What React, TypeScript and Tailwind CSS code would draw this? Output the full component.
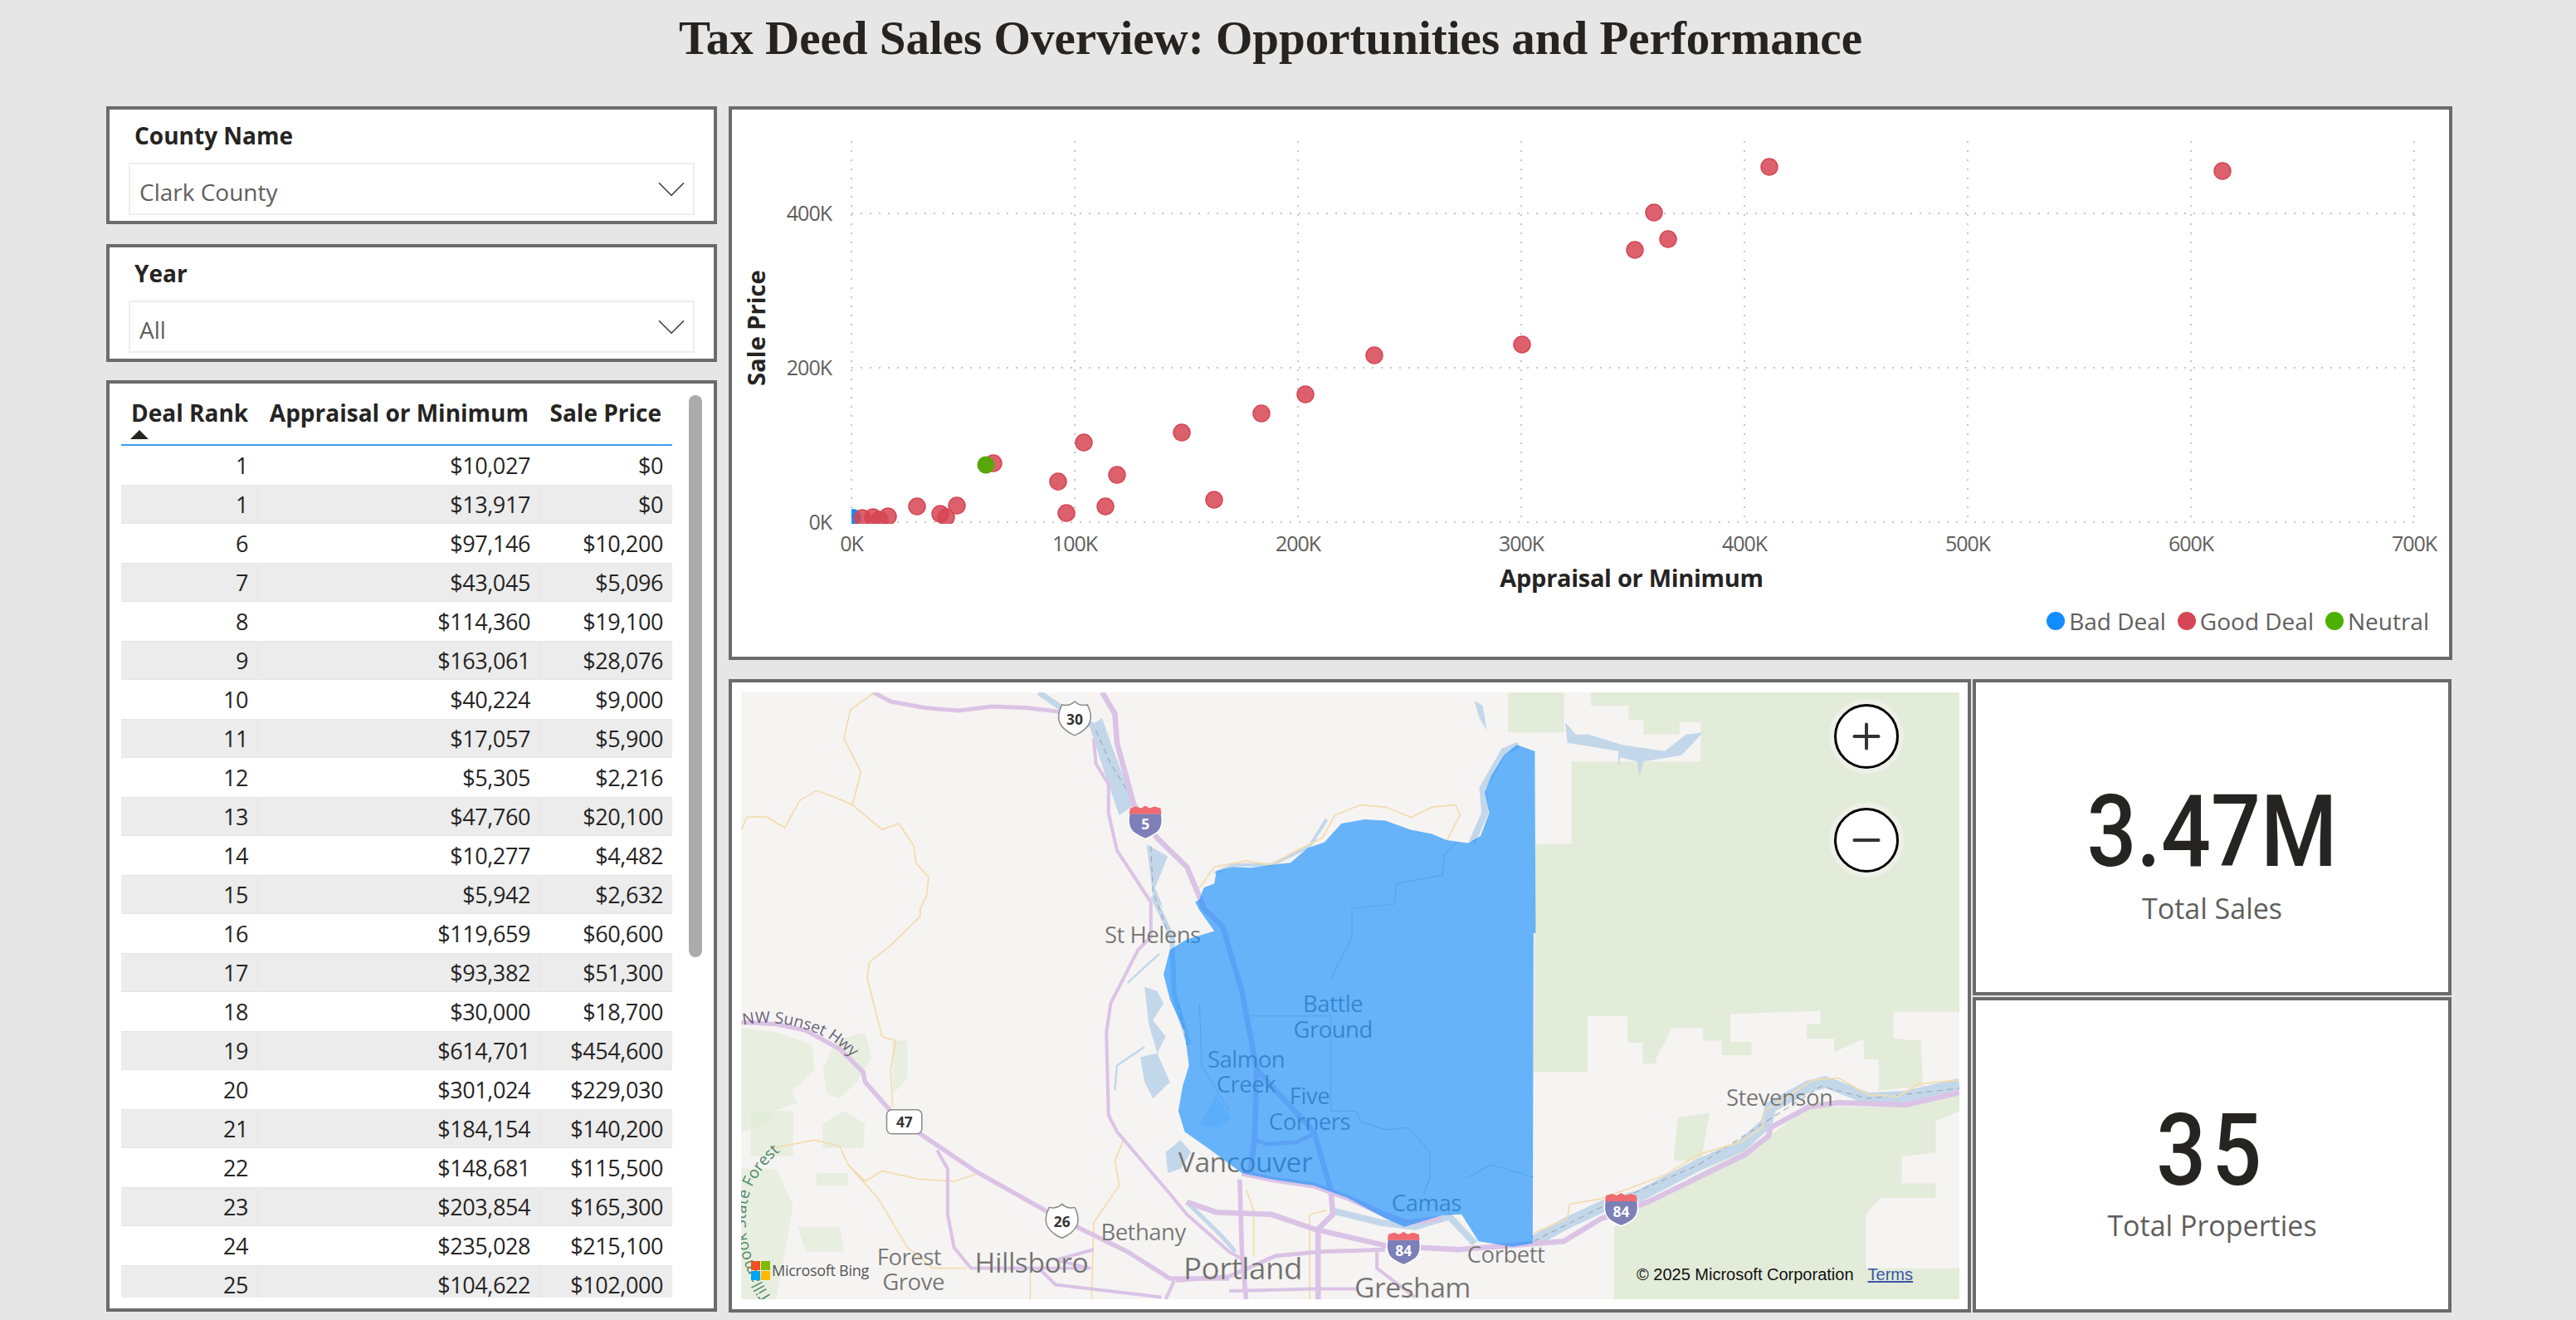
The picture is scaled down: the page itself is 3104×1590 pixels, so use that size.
import React from 'react';
import { ChevronDown, Plus, Minus } from 'lucide-react';

const rows: [number, string, string][] = [
    [1, '$10,027', '$0'],
    [1, '$13,917', '$0'],
    [6, '$97,146', '$10,200'],
    [7, '$43,045', '$5,096'],
    [8, '$114,360', '$19,100'],
    [9, '$163,061', '$28,076'],
    [10, '$40,224', '$9,000'],
    [11, '$17,057', '$5,900'],
    [12, '$5,305', '$2,216'],
    [13, '$47,760', '$20,100'],
    [14, '$10,277', '$4,482'],
    [15, '$5,942', '$2,632'],
    [16, '$119,659', '$60,600'],
    [17, '$93,382', '$51,300'],
    [18, '$30,000', '$18,700'],
    [19, '$614,701', '$454,600'],
    [20, '$301,024', '$229,030'],
    [21, '$184,154', '$140,200'],
    [22, '$148,681', '$115,500'],
    [23, '$203,854', '$165,300'],
    [24, '$235,028', '$215,100'],
    [25, '$104,622', '$102,000'],
];

// chart dots, in page pixels
const goodDeals = [
    [1039, 624], [1052, 623], [1060, 626], [1070, 622], [1105, 610], [1133, 619], [1140, 623], [1153, 609],
    [1197, 558], [1275, 580], [1306, 533], [1285, 618], [1346, 572], [1332, 610], [1424, 521], [1463, 602],
    [1520, 498], [1573, 475], [1656, 428], [1834, 415], [1970, 301], [1993, 256], [2010, 288], [2132, 201], [2678, 206],
];

const xTicks = [0, 100, 200, 300, 400, 500, 600, 700];
const yTicks: [string, number][] = [['400K', 257], ['200K', 443], ['0K', 629]];

const Slicer = ({ title, value }: { title: string; value: string }) => (
    <div className="h-[142px] bg-white border-4 border-[#6b6b6b] pt-[13px] px-[23px] flex flex-col">
        <div className="h-[51px] pl-[7px] text-[28px] leading-[36px] font-bold text-[#252423] tracking-[0px]">{title}</div>
        <div className="h-[63px] border-2 border-[#eeeeee] flex items-center justify-between pl-[11px] relative">
            <span className="text-[28px] text-[#605e5c] tracking-[0px] mt-[6px]">{value}</span>
            <ChevronDown size={58} strokeWidth={0.7} className="absolute right-[-3px] top-[1px] text-[#444444]" />
        </div>
    </div>
);

const DealTable = () => (
    <div className="h-[1122px] bg-white border-4 border-[#6b6b6b] relative overflow-hidden pt-[14px] pl-[14px]">
        <div className="w-[664px]">
            <div className="h-[61px] relative flex text-[28px] leading-[36px] font-bold text-[#252423] tracking-[0px] border-b-2 border-[#3d9df5]">
                <div className="w-[165px] pl-[12px] pt-[3px] whitespace-nowrap">Deal Rank</div>
                <div className="w-[340px] pt-[3px] text-right pr-[14px] whitespace-nowrap">Appraisal or Minimum</div>
                <div className="w-[159px] pt-[3px] text-right pr-[13px] whitespace-nowrap">Sale Price</div>
                <div className="absolute left-[11px] bottom-[6px] w-0 h-0 border-l-[11px] border-r-[11px] border-b-[11px] border-l-transparent border-r-transparent border-b-[#252423]"></div>
            </div>
            <div className="h-[1026px] overflow-hidden text-[27px] tracking-[-0.4px] text-[#252423]">
                {rows.map(([rank, appraisal, sale], i) => (
                    <div key={i} className={`h-[47px] flex items-center text-right border-y ${i % 2 === 1 ? 'bg-[#ececec] border-[#e4e4e4]' : 'bg-white border-transparent'}`}>
                        <div className={`w-[165px] pr-[11px] pt-[1px] border-r ${i % 2 === 1 ? 'border-[#e4e4e4]' : 'border-transparent'}`}>{rank}</div>
                        <div className={`w-[340px] pr-[11px] pt-[1px] border-r ${i % 2 === 1 ? 'border-[#e4e4e4]' : 'border-transparent'}`}>{appraisal}</div>
                        <div className="w-[159px] pr-[11px] pt-[1px]">{sale}</div>
                    </div>
                ))}
            </div>
        </div>
        <div className="absolute left-[698px] top-[14px] w-[16px] h-[677px] rounded-full bg-[#ababab]"></div>
    </div>
);

const ScatterChart = () => (
    <svg className="block w-[2069px] h-[588px]" viewBox="882 132 2069 588" fontFamily="'Open Sans', sans-serif">
        <defs>
            <clipPath id="plot"><rect x="1026" y="130" width="1900" height="501" /></clipPath>
        </defs>
        {xTicks.map((t) => {
            const x = 1026 + t * 2.69;
            return (
                <g key={t}>
                    <line x1={x} x2={x} y1={170} y2={631} stroke="#c8c6c4" strokeWidth={2} strokeDasharray="2 9" />
                    <text x={x} y={664} textAnchor="middle" fontSize={25} letterSpacing={-1} fill="#605e5c">{t}K</text>
                </g>
            );
        })}
        {yTicks.map(([label, y]) => (
            <g key={label}>
                <line x1={1026} x2={2909} y1={y} y2={y} stroke="#c8c6c4" strokeWidth={2} strokeDasharray="2 9" />
                <text x={1002} y={y + 9} textAnchor="end" fontSize={25} letterSpacing={-1} fill="#605e5c">{label}</text>
            </g>
        ))}
        <g clipPath="url(#plot)">
            <circle cx={1028} cy={623} r={10} fill="#118dff" />
            {goodDeals.map(([cx, cy], i) => (
                <circle key={i} cx={cx} cy={cy} r={10} fill="#d64554" fillOpacity={0.85} stroke="#d64554" strokeWidth={1.5} />
            ))}
            <circle cx={1188} cy={560} r={10.5} fill="#58a60a" />
        </g>
        <text transform="translate(922 395) rotate(-90)" textAnchor="middle" fontSize={29} fontWeight={700} fill="#252423">Sale Price</text>
        <text x={1966} y={707} textAnchor="middle" fontSize={29} fontWeight={700} letterSpacing={-0.3} fill="#252423">Appraisal or Minimum</text>
    </svg>
);

const LegendItem = ({ color, label }: { color: string; label: string }) => (
    <div className="flex items-center gap-[5px]">
        <span className={`w-[22px] h-[22px] rounded-full ${color}`}></span>
        <span className="text-[28px] tracking-[0px] text-[#605e5c]">{label}</span>
    </div>
);

const Shield = ({ x, y, label }: { x: number; y: number; label: string }) => (
    <g transform={`translate(${x} ${y})`}>
        <path d="M-30,-34 Q-12,-30 0,-42 Q12,-30 30,-34 Q42,-10 36,8 Q28,28 0,40 Q-28,28 -36,8 Q-42,-10 -30,-34 Z" fill="#ffffff" stroke="#8c8c8c" strokeWidth={3} />
        <text y={14} textAnchor="middle" fontSize={34} fontWeight={700} fill="#333333">{label}</text>
    </g>
);

const Interstate = ({ x, y, label }: { x: number; y: number; label: string }) => (
    <g transform={`translate(${x} ${y})`}>
        <path d="M-38,-22 L38,-22 Q44,12 26,26 Q12,36 0,40 Q-12,36 -26,26 Q-44,12 -38,-22 Z" fill="#7d7fb8" stroke="#ffffff" strokeWidth={3} />
        <path d="M-38,-20 L38,-20 L36,-34 L22,-38 L10,-34 L0,-40 L-10,-34 L-22,-38 L-36,-34 Z" fill="#f06a6f" />
        <text y={18} textAnchor="middle" fontSize={34} fontWeight={700} fill="#ffffff">{label}</text>
    </g>
);

const Place = ({ x, y, size = 54, anchor = 'middle', children }: { x: number; y: number; size?: number; anchor?: 'middle' | 'start'; children: string }) => (
    <text x={x} y={y} fontSize={size} textAnchor={anchor} letterSpacing={-1} fill="#6f6f6f" stroke="#ffffff" strokeOpacity={0.35} strokeWidth={1}>{children}</text>
);

// everything below is in units of about half a page pixel
const MapDrawing = () => (
    <svg className="block w-full h-full" viewBox="47 48 2878 1467" preserveAspectRatio="none" fontFamily="'Open Sans', sans-serif">
        <defs>
            <path id="sunset" d="M52,852 C130,835 210,860 262,890 C290,910 310,930 335,955" />
            <path id="tillamook" d="M120,1512 C70,1440 40,1340 70,1250 C90,1200 130,1160 176,1130" />
        </defs>
        <rect x="47" y="48" width="2878" height="1467" fill="#f6f4f2" />

        {/* forest */}
        <g fill="#e3ebd9">
            <g fillOpacity={0.7}>
                <path d="M48,860 L130,870 L215,900 L220,960 L190,990 L165,1010 L180,1040 L125,1060 L105,1095 L48,1110 Z" />
                <path d="M270,890 L340,870 L355,930 L320,990 L280,1030 L250,1020 L240,960 Z" />
                <path d="M405,890 L440,890 L440,980 L405,1020 Z" />
                <path d="M70,1060 L170,1060 L170,1170 L70,1170 Z" />
                <path d="M240,1090 L290,1060 L340,1090 L335,1150 L240,1150 Z" />
                <path d="M48,1200 L130,1200 L170,1290 L130,1515 L48,1515 Z" />
                <path d="M180,1340 L280,1340 L290,1400 L200,1400 Z" />
                <path d="M225,1210 L300,1210 L300,1240 L225,1240 Z" />
            </g>
            <path d="M1859,48 L1991,48 L1991,145 L1859,145 Z" />
            <path d="M2054,48 L2925,48 L2925,820 L2769,820 L2769,885 L2834,890 L2839,1000 L2734,1010 L2734,935 L2699,935 L2699,885 L2629,918 L2629,885 L2564,885 L2564,850 L2597,850 L2597,818 L2384,825 L2384,893 L2434,893 L2434,925 L2364,925 L2364,890 L2319,890 L2319,860 L2244,860 L2229,895 L2209,930 L2209,945 L2177,945 L2177,895 L2141,895 L2141,830 L2047,830 L2047,965 L1919,965 L1924,415 L2009,415 L2009,215 L2314,215 L2314,120 L2264,120 L2264,150 L2179,150 L2179,115 L2144,115 L2144,80 L2054,80 Z" />
            <path d="M2109,1515 L2109,1340 L2169,1290 L2489,1110 L2569,1050 L2799,1050 L2925,1020 L2925,1060 L2869,1085 L2869,1160 L2789,1170 L2789,1235 L2869,1235 L2869,1270 L2739,1270 L2704,1310 L2704,1440 L2925,1440 L2925,1515 Z" />
            <path d="M2260,1075 L2335,1065 L2325,1120 L2315,1180 L2250,1180 Z" />
        </g>

        {/* water */}
        <g fill="#c3d7ea">
            <path d="M1994,120 L2019,150 L2049,150 L2129,175 L2229,190 L2279,150 L2319,145 L2269,200 L2179,215 L2169,250 L2164,215 L2124,205 L2119,230 L2119,190 L2029,175 L1999,170 Z" />
            <path d="M1779,68 L1799,80 L1809,140 L1791,110 Z" />
            <path d="M1000,760 L1030,770 L1045,800 L1020,840 L1050,880 L1030,920 L1060,990 L1020,1030 L1000,990 L990,930 L1030,920 L1010,850 Z" />
            <path d="M1005,415 L1055,445 L1025,520 L1045,570 L1020,540 Z" />
            <path d="M900,110 L920,170 L975,320 L940,345 L905,240 L870,130 Z" />
            <path d="M1055,1210 L1050,1160 L1085,1130 L1110,1160 L1085,1200 Z" />
        </g>
        <g fill="none" stroke="#c3d7ea">
            <path d="M750,48 L810,90 L880,130" strokeWidth={14} />
            <path d="M1020,540 L1065,640 L1070,780 L1105,900" strokeWidth={12} />
            <path d="M930,1010 L935,950 L1000,905" strokeWidth={5} />
            <path d="M960,750 L1035,680" strokeWidth={5} />
            <path d="M1100,1280 L1180,1360 L1215,1400" strokeWidth={10} />
            <path d="M1440,1300 L1560,1330 L1640,1340 L1720,1315 L1780,1380" strokeWidth={16} />
            <path d="M1919,1375 L1999,1330 L2084,1290 L2169,1265 L2309,1190 L2409,1145 L2469,1090 L2479,1050 L2569,1000 L2609,990 L2709,1030 L2799,1025 L2925,995" strokeWidth={28} />
            <path d="M1774,410 L1804,340 L1799,280 L1849,190 L1884,175" strokeWidth={16} />
            <path d="M1430,355 L1390,420 L1300,465 L1210,465 L1165,485" strokeWidth={8} />
        </g>
        <path d="M885,140 L920,220 L980,320 M1015,420 L1020,530 L1060,640 M1080,800 L1100,900 M1919,1375 L2084,1290 L2309,1190 L2469,1085 L2599,1000 L2709,1030 L2925,1005" fill="none" stroke="#9aa5ad" strokeWidth={2} strokeDasharray="14 10" />

        {/* small roads and borders */}
        <g fill="none" stroke="#f3dcae" strokeWidth={3.5}>
            <path d="M360,50 L305,90 L290,160 L330,240 L310,320 L380,380 L420,365 L455,420 L460,460 L490,495 L485,540 L470,570 L470,590 L400,660 L350,700 L345,740 L380,880 L412,890 L400,960 L405,1050" />
            <path d="M48,380 L60,350 L105,348 L150,375 L185,310 L225,285 L265,300 L310,320" />
            <path d="M120,1150 L220,1130 L280,1145 L300,1190 L340,1230 L380,1205 L470,1225 L550,1230 L610,1210" />
            <path d="M300,1190 L370,1270 L440,1390 L500,1440 L580,1440" />
            <path d="M950,1130 L930,1180 L940,1240 L880,1330 L875,1515" />
            <path d="M730,1440 L730,1515" />
            <path d="M1240,1250 L1258,1300 L1258,1410" />
            <path d="M1390,1310 L1430,1300 M1390,1310 L1390,1515" />
            <path d="M1130,520 L1165,470 L1240,455 L1300,465 L1360,430 L1420,400 L1450,345 L1510,320 L1570,325 L1630,350 L1680,325 L1735,320 L1745,345 L1715,405" />
            <path d="M1919,1355 L1999,1320 L2004,1285 L2079,1272 L2229,1215 L2309,1165 L2409,1135 L2459,1100 L2464,1060 L2579,985 L2639,980 L2709,1020 L2779,1025 L2829,995 L2925,985" />
        </g>
        <g fill="none" stroke="#8f9ea8" strokeOpacity={0.55} strokeWidth={2}>
            <path d="M1250,830 L1440,830 L1440,1060 L1500,1060 L1510,1085 L1568,1105 L1624,1100 L1674,1160 L1674,1220 L1660,1260" />
            <path d="M1440,740 L1490,640 L1490,570 L1590,560 L1595,510 L1704,490 L1709,440 L1739,410" />
            <path d="M1764,1220 L1819,1190 L1919,1220" />
            <path d="M1130,800 L1135,950 L1200,1060" />
        </g>

        {/* highways */}
        <g fill="none" stroke="#dbc3e6" strokeLinejoin="round">
            <path d="M360,48 L400,70 L480,85 L560,92 L640,82 L720,85 L800,95" strokeWidth={10} />
            <path d="M880,160 L885,220 L915,270 L915,340 L935,430 L1015,555 L1015,640 L985,670 L920,800 L910,870 L915,1070 L935,1110 L1060,1260 L1100,1310 L1200,1400 L1235,1420" strokeWidth={8} />
            <path d="M900,48 L930,100 L935,170 L975,320 L1000,360 L1030,400 L1100,470 L1125,530 L1140,570 L1185,615 L1230,770 L1265,960 L1260,1130 L1250,1210" strokeWidth={13} />
            <path d="M1265,960 L1400,1110 L1440,1250 L1445,1310 L1410,1345 L1410,1515" strokeWidth={13} />
            <path d="M1260,1130 L1290,1140 L1360,1135 L1400,1115" strokeWidth={10} />
            <path d="M1230,1210 L1300,1225 L1400,1240 L1480,1270 L1568,1310 L1620,1330 L1700,1320" strokeWidth={14} />
            <path d="M48,845 L130,850 L200,865 L280,910 L335,965 L340,990 L400,1060 L470,1115 L600,1205 L765,1300 L850,1345 L960,1400 L1060,1465 L1200,1465" strokeWidth={11} />
            <path d="M510,1155 L535,1200 L535,1310 L550,1390 L590,1440 L870,1440 L750,1440 L790,1480 L1040,1510" strokeWidth={8} />
            <path d="M1225,1225 L1230,1400 L1240,1515" strokeWidth={11} />
            <path d="M1100,1280 L1170,1305 L1300,1310 L1400,1345 L1568,1385 L1740,1395 L1990,1375 L2079,1320 L2189,1280 L2419,1165 L2474,1120 L2479,1100 L2569,1050 L2639,1040 L2799,1045 L2925,1015" strokeWidth={13} />
            <path d="M1075,1470 L1200,1460 L1310,1410 L1415,1400 L1568,1395" strokeWidth={10} />
            <path d="M1050,1515 L1070,1470 M1200,1495 L1400,1490 L1500,1490 M1549,1400 L1549,1440 L1639,1510" strokeWidth={8} />
            <path d="M880,1395 L790,1420 L870,1440" strokeWidth={8} />
        </g>

        {/* town names sit under the county fill, as in the map */}
        <Place x={1445} y={820}>Battle</Place>
        <Place x={1445} y={882}>Ground</Place>
        <Place x={1240} y={955}>Salmon</Place>
        <Place x={1240} y={1016}>Creek</Place>
        <Place x={1390} y={1043}>Five</Place>
        <Place x={1390} y={1105}>Corners</Place>
        <Place x={1238} y={1208} size={66}>Vancouver</Place>
        <Place x={1666} y={1302}>Camas</Place>
        <Place x={1019} y={655}>St Helens</Place>

        <path
            d="M1120,555 L1130,548 L1140,520 L1165,510 L1170,480 L1210,470 L1250,472 L1300,465 L1345,460 L1385,425 L1425,410 L1465,365 L1520,355 L1569,358 L1629,380 L1679,390 L1714,405 L1764,412 L1794,395 L1814,340 L1804,290 L1819,250 L1849,200 L1879,175 L1922,190 L1924,630 L1919,630 L1917,1380 L1869,1388 L1789,1375 L1749,1310 L1704,1312 L1614,1340 L1569,1320 L1480,1270 L1400,1240 L1300,1225 L1230,1210 L1150,1150 L1095,1110 L1080,1060 L1090,1000 L1105,950 L1095,870 L1060,790 L1045,730 L1060,670 L1100,645 L1165,625 L1130,575 Z"
            fill="#118dff"
            fillOpacity={0.63}
        />
        <path d="M1130,1095 L1170,1020 L1205,1080 L1170,1100 Z" fill="#118dff" fillOpacity={0.12} />

        <Place x={1762} y={1427} anchor="start">Corbett</Place>
        <Place x={2374} y={1048} anchor="start">Stevenson</Place>
        <Place x={997} y={1372}>Bethany</Place>
        <Place x={444} y={1432}>Forest</Place>
        <Place x={454} y={1493}>Grove</Place>
        <Place x={733} y={1450} size={66}>Hillsboro</Place>
        <Place x={1232} y={1466} size={72}>Portland</Place>
        <Place x={1633} y={1512} size={66}>Gresham</Place>

        <text fontSize={38} fill="#6b6378">
            <textPath href="#sunset">NW Sunset Hwy</textPath>
        </text>
        <text fontSize={38} fill="#4f8a6a">
            <textPath href="#tillamook">Tillamook State Forest</textPath>
        </text>

        <Shield x={835} y={112} label="30" />
        <Shield x={805} y={1327} label="26" />
        <rect x={391} y={1057} width={83} height={58} rx={12} fill="#ffffff" stroke="#8c8c8c" strokeWidth={3} />
        <text x={433} y={1099} textAnchor="middle" fontSize={34} fontWeight={700} fill="#333333">47</text>
        <Interstate x={1002} y={362} label="5" />
        <Interstate x={2126} y={1298} label="84" />
        <Interstate x={1612} y={1392} label="84" />
    </svg>
);

const MapVisual = () => (
    <div className="w-[1497px] h-full bg-white border-4 border-[#6b6b6b] pl-[11px] pr-[10px] pt-[12px] pb-[12px]">
        <div className="relative w-full h-full overflow-hidden">
            <MapDrawing />
            <div className="absolute right-[73px] top-[14px] flex flex-col gap-[47px]">
                <button className="w-[78px] h-[78px] rounded-full bg-white border-[3px] border-black ring-[6px] ring-[#eef0e8] flex items-center justify-center text-[#333333]">
                    <Plus size={50} strokeWidth={1.9} />
                </button>
                <button className="w-[78px] h-[78px] rounded-full bg-white border-[3px] border-black ring-[6px] ring-[#eef0e8] flex items-center justify-center text-[#333333]">
                    <Minus size={50} strokeWidth={1.9} />
                </button>
            </div>
            <div className="absolute left-[12px] bottom-[21px] flex items-center">
                <svg width="23" height="23" viewBox="0 0 23 23">
                    <rect width="11" height="11" fill="#f25022" />
                    <rect x="12" width="11" height="11" fill="#7fba00" />
                    <rect y="12" width="11" height="11" fill="#00a4ef" />
                    <rect x="12" y="12" width="11" height="11" fill="#ffb900" />
                </svg>
                <span className="text-[18px] text-[#555555] tracking-[-0.3px] ml-[2px] font-['Open_Sans',sans-serif]">Microsoft Bing</span>
            </div>
            <div className="absolute left-[1079px] bottom-[17px] flex gap-[17px] text-[20px] leading-[26px] font-['Liberation_Sans',sans-serif] text-[#111111]">
                <span>© 2025 Microsoft Corporation</span>
                <span className="text-[#3a56a8] underline">Terms</span>
            </div>
        </div>
    </div>
);

const KpiCard = ({ value, label, spaced }: { value: string; label: string; spaced?: boolean }) => (
    <div className="flex-1 bg-white border-4 border-[#6b6b6b] flex flex-col items-center justify-center pt-[42px]">
        <div className={`font-['Roboto',sans-serif] font-medium text-[120px] leading-[122px] text-[#252423] scale-x-[0.88] ${spaced ? 'tracking-[8px]' : 'tracking-[0px]'}`}>{value}</div>
        <div className={`text-[34px] leading-[46px] text-[#605e5c] ${spaced ? 'mt-[6px]' : 'mt-[8px]'}`}>{label}</div>
    </div>
);

export default function App() {
    return (
        <div className="w-[3104px] h-[1590px] bg-[#e6e6e6] font-['Open_Sans',sans-serif] overflow-hidden">
            <div className="h-[128px] pt-[15px] pr-[42px] text-center">
                <h1 className="font-['Liberation_Serif',serif] text-[57px] leading-[62px] font-bold text-[#252423]">Tax Deed Sales Overview: Opportunities and Performance</h1>
            </div>
            <div className="flex pl-[128px] gap-[14px]">
                <div className="w-[736px] flex flex-col">
                    <Slicer title="County Name" value="Clark County" />
                    <div className="h-[24px]"></div>
                    <Slicer title="Year" value="All" />
                    <div className="h-[22px]"></div>
                    <DealTable />
                </div>
                <div className="w-[2077px] flex flex-col gap-[23px]">
                    <div className="h-[667px] bg-white border-4 border-[#6b6b6b]">
                        <ScatterChart />
                        <div className="h-[56px] flex justify-end items-center gap-[14px] pr-[24px]">
                            <LegendItem color="bg-[#118dff]" label="Bad Deal" />
                            <LegendItem color="bg-[#d64554]" label="Good Deal" />
                            <LegendItem color="bg-[#4bb000]" label="Neutral" />
                        </div>
                    </div>
                    <div className="h-[763px] flex gap-[2px]">
                        <MapVisual />
                        <div className="w-[577px] flex flex-col gap-[2px]">
                            <KpiCard value="3.47M" label="Total Sales" />
                            <KpiCard value="35" label="Total Properties" spaced />
                        </div>
                    </div>
                </div>
            </div>
        </div>
    );
}
